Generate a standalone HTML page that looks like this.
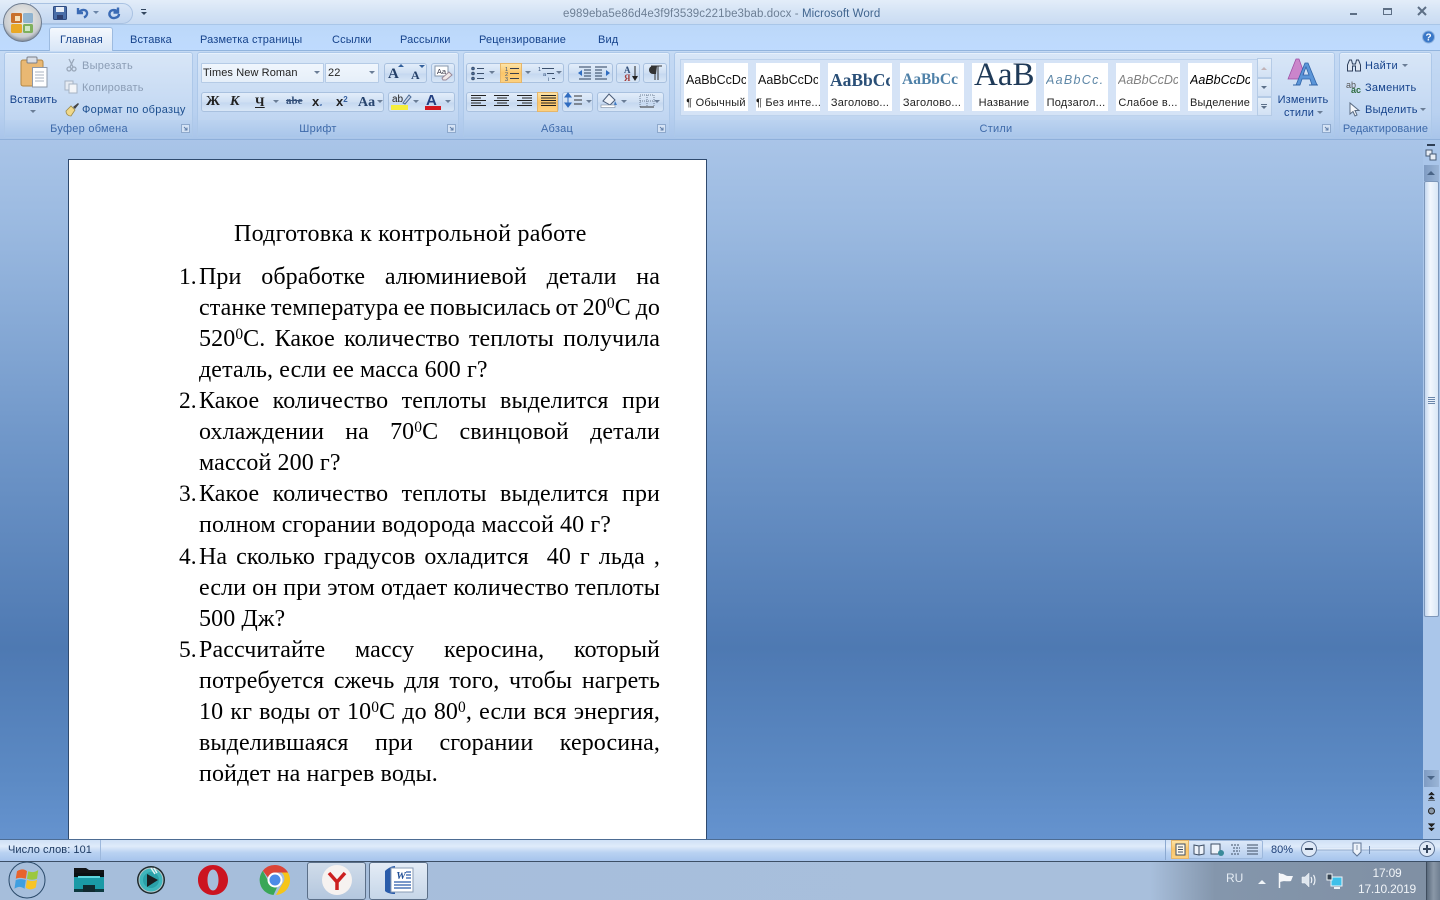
<!DOCTYPE html>
<html lang="ru"><head><meta charset="utf-8"><title>Microsoft Word</title>
<style>
*{box-sizing:border-box}
html,body{margin:0;padding:0}
body{width:1440px;height:900px;position:relative;overflow:hidden;font-family:"Liberation Sans",sans-serif;background:#6f97cc}
.a{position:absolute}
.t{position:absolute;font-size:11px;line-height:14px;white-space:nowrap;color:#15428b;letter-spacing:.15px;margin-top:1px}
.c{text-align:center;transform:translateX(-50%)}
#bg{left:0;top:138px;width:1440px;height:701px;background:linear-gradient(#aac5e8 0,#9ab9e0 90px,#7097c9 300px,#4e79b2 510px,#5c8ac4 640px,#6593cf 701px)}
#title{left:0;top:0;width:1440px;height:25px;background:linear-gradient(#e3edf9,#d4e3f5 50%,#c9dbf2)}
#tabs{left:0;top:24px;width:1440px;height:28px;background:linear-gradient(#bcd8f9,#bfdbff);border-top:1px solid #a9c6e8}
#rib{left:0;top:50px;width:1440px;height:90px;background:linear-gradient(#c5daf4,#b9d1f0 70%,#a9c5ea);border-bottom:1px solid #8fb0da;border-top:1px solid #92b4dd}
.g{position:absolute;top:52px;height:86px;border:1px solid #adc8e9;border-radius:3px;background:linear-gradient(#d8e6f7,#c6daf3 60%,#b9d0ee);box-shadow:0 1px 0 #e6f0fc inset}
.gl{position:absolute;left:0;right:0;bottom:0;height:17px;background:linear-gradient(#bcd3f0,#a9c6ea);color:#3e6aaa;text-align:center;font-size:11px;line-height:18px;letter-spacing:.25px}
.bx{position:absolute;border:1px solid #a9c1df;border-radius:3px;background:linear-gradient(#e2edfa,#cfdff3 50%,#c5d8f0 55%,#d8e6f6)}
.wh{background:linear-gradient(#f0f6fd,#e6eff9);border:1px solid #b5cbe6;border-radius:1px}
.hl{position:absolute;background:linear-gradient(#fde4a8,#fbc568 50%,#fdd17f);border:1px solid #e5b66b}
.ar{position:absolute;width:0;height:0;border-left:3px solid transparent;border-right:3px solid transparent;border-top:3px solid #6a7d96}
.cell{position:absolute;top:63px;width:64px;height:48px;background:#fff;overflow:hidden}
.cell b,.cell i,.cell span{position:absolute;white-space:nowrap}
.cell .n{left:0;right:0;top:33px;text-align:center;font-size:11px;line-height:14px;color:#222;letter-spacing:.2px}
.cell .s{left:2px;top:10px;width:60px;overflow:hidden;font-size:12.5px;line-height:15px;color:#111;font-weight:normal;font-style:normal}
#page{left:69px;top:160px;width:637px;height:679px;background:#fff;box-shadow:0 0 0 1px #2f4a6e}
.l{position:absolute;left:199px;width:461px;height:31px;line-height:31px;margin-top:1px;font-family:"Liberation Serif",serif;font-size:24px;letter-spacing:.1px;color:#000;text-align:justify;text-align-last:justify;white-space:nowrap}
.e{text-align-last:left}
.num{position:absolute;left:179px;height:31px;line-height:31px;margin-top:1px;font-family:"Liberation Serif",serif;font-size:23.47px;color:#000}
.l sup{font-size:15.5px;line-height:0;vertical-align:7px}
#sb{left:1423px;top:140px;width:17px;height:699px;background:#aac6ea}
#st{left:0;top:839px;width:1440px;height:22px;background:linear-gradient(#cfe0f6,#dfebfa 30%,#b9d2f2 60%,#a7c4ec);border-top:1px solid #4d6c93}
#tb{left:0;top:861px;width:1440px;height:39px;background:linear-gradient(90deg,#a6bedb 0,#a8bfdc 1150px,#8496ac 1215px,#7f8fa3 100%);border-top:1px solid #3c4f66}
.tbb{position:absolute;top:862px;width:59px;height:38px;border:1px solid #5b6f88;border-radius:3px;background:linear-gradient(#d0dcea,#b4c7de)}
svg{position:absolute;overflow:visible}
</style></head><body>
<div class="a" id="bg"></div>
<div class="a" id="title"></div>
<div class="a" id="tabs"></div>
<div class="a" id="rib"></div>

<!-- QAT -->
<div class="a" style="left:30px;top:3px;width:103px;height:21px;border-radius:0 11px 11px 0;background:linear-gradient(#d9e6f7,#c2d6f0);border:1px solid #a9c2e2"></div>
<!-- Office button -->
<svg style="left:0;top:0" width="46" height="46" viewBox="0 0 46 46">
<defs><radialGradient id="o" cx=".5" cy=".4" r=".6"><stop offset="0" stop-color="#f6f3ea"/><stop offset=".8" stop-color="#c9ccd0"/><stop offset="1" stop-color="#7d8794"/></radialGradient></defs>
<circle cx="22.5" cy="22.5" r="19" fill="url(#o)" stroke="#6d7b8e"/>
<rect x="11" y="13" width="11" height="10" rx="1.5" fill="#c9702a"/>
<rect x="23" y="13" width="10" height="10" rx="1.5" fill="#7aa7cc" fill-opacity=".8"/>
<rect x="11" y="24" width="11" height="9" rx="1.5" fill="#e9a825"/>
<rect x="23" y="24" width="10" height="9" rx="1.5" fill="#7fb05d"/>
<rect x="15" y="16" width="5" height="5" fill="#f6e0b8"/><rect x="25" y="26" width="5" height="5" fill="#cfe8c5"/>
</svg>
<!-- save/undo/redo -->
<svg style="left:53px;top:6px" width="14" height="14" viewBox="0 0 14 14"><rect x="0.5" y="0.5" width="13" height="13" rx="1" fill="#4a6ea8" stroke="#2f4a80"/><rect x="3" y="1" width="8" height="5" fill="#e8eef7"/><rect x="4" y="9" width="6" height="4" fill="#2f4070"/></svg>
<svg style="left:75px;top:6px" width="15" height="14" viewBox="0 0 15 14"><path d="M3 2v5h5M3.5 7C6 3 11 3 12 6.500c.5 2-1 4-3 5" fill="none" stroke="#3b6bb5" stroke-width="2.400"/></svg>
<div class="ar" style="left:93px;top:11px;border-top-color:#6b85a8"></div>
<svg style="left:107px;top:6px" width="15" height="14" viewBox="0 0 15 14"><path d="M11 1.500v5H6.500M11 6C8.500 3 3.500 3.500 2.500 7c-.7 3 2 5.500 5 5s4.500-2 4.500-4" fill="none" stroke="#3b6bb5" stroke-width="2.400"/></svg>
<div class="a" style="left:141px;top:9px;width:5px;height:1px;background:#33475f"></div><div class="ar" style="left:140.500px;top:12px;border-top-color:#33475f"></div>

<div class="t" style="left:563px;top:7px;margin-top:0;font-size:11.5px;letter-spacing:.09px;color:#6d7f95">e989eba5e86d4e3f9f3539c221be3bab.docx - <span style="color:#41658f">Microsoft Word</span></div>
<!-- window buttons -->
<div class="a" style="left:1350px;top:13px;width:7px;height:2px;background:#5d6f85"></div>
<div class="a" style="left:1383px;top:8px;width:9px;height:7px;border:1px solid #5d6f85;border-top-width:2px"></div>
<svg style="left:1417px;top:6px" width="10" height="10" viewBox="0 0 10 10"><path d="M1 1l8 8M9 1l-8 8" stroke="#5d6f85" stroke-width="2"/></svg>

<!-- tabs -->
<div class="a" style="left:49px;top:27px;width:64px;height:24px;background:linear-gradient(#f4f8fd,#d8e6f7);border:1px solid #9dbbe0;border-bottom:0;border-radius:3px 3px 0 0"></div>
<div class="t" style="left:60px;top:32px;color:#15428b">Главная</div>
<div class="t" style="left:130px;top:32px">Вставка</div>
<div class="t" style="left:200px;top:32px">Разметка страницы</div>
<div class="t" style="left:332px;top:32px">Ссылки</div>
<div class="t" style="left:400px;top:32px">Рассылки</div>
<div class="t" style="left:479px;top:32px">Рецензирование</div>
<div class="t" style="left:598px;top:32px">Вид</div>
<svg style="left:1422px;top:30px" width="13" height="14" viewBox="0 0 13 14"><circle cx="6.500" cy="7" r="6" fill="#3a78c8" stroke="#8fb3df"/><text x="6.500" y="10.500" font-size="10" font-weight="bold" fill="#fff" text-anchor="middle" font-family="Liberation Sans">?</text></svg>

<!-- groups -->
<div class="g" style="left:4px;width:189px"><div class="gl" style="padding-right:19px">Буфер обмена</div></div>
<div class="g" style="left:197px;width:262px"><div class="gl" style="padding-right:20px">Шрифт</div></div>
<div class="g" style="left:463px;width:207px"><div class="gl" style="padding-right:19px">Абзац</div></div>
<div class="g" style="left:674px;width:661px"><div class="gl" style="padding-right:17px">Стили</div></div>
<div class="g" style="left:1339px;width:93px"><div class="gl" style="letter-spacing:.1px">Редактирование</div></div>
<svg style="left:181px;top:124px" width="9" height="9"><rect x=".5" y=".5" width="8" height="8" fill="#d5e3f5" stroke="#8ea9cc"/><path d="M3 3l3 3M6 3.500V6H3.500" stroke="#5f7ea8" fill="none"/></svg>
<svg style="left:447px;top:124px" width="9" height="9"><rect x=".5" y=".5" width="8" height="8" fill="#d5e3f5" stroke="#8ea9cc"/><path d="M3 3l3 3M6 3.500V6H3.500" stroke="#5f7ea8" fill="none"/></svg>
<svg style="left:657px;top:124px" width="9" height="9"><rect x=".5" y=".5" width="8" height="8" fill="#d5e3f5" stroke="#8ea9cc"/><path d="M3 3l3 3M6 3.500V6H3.500" stroke="#5f7ea8" fill="none"/></svg>
<svg style="left:1322px;top:124px" width="9" height="9"><rect x=".5" y=".5" width="8" height="8" fill="#d5e3f5" stroke="#8ea9cc"/><path d="M3 3l3 3M6 3.500V6H3.500" stroke="#5f7ea8" fill="none"/></svg>

<!-- clipboard -->
<svg style="left:20px;top:56px" width="28" height="33" viewBox="0 0 28 33"><rect x="1" y="4" width="22" height="26" rx="2" fill="#e9b873" stroke="#b48744"/><rect x="7" y="1" width="10" height="6" rx="1" fill="#d9dee6" stroke="#7a7f88"/><path d="M12.500 11.500H27V31H12.500z" fill="#fff" stroke="#8d98a8"/><path d="M15 16h9M15 19h9M15 22h9M15 25h9" stroke="#a9b3c0"/></svg>
<div class="t c" style="left:33.500px;top:92px;letter-spacing:.1px">Вставить</div>
<div class="ar" style="left:30px;top:110px"></div>
<svg style="left:66px;top:58px" width="11" height="14" viewBox="0 0 11 14"><path d="M3 1l4 8M8 1L4 9" stroke="#9aa8ba" stroke-width="1.300"/><circle cx="3" cy="11" r="2" fill="none" stroke="#9aa8ba" stroke-width="1.300"/><circle cx="8" cy="11" r="2" fill="none" stroke="#9aa8ba" stroke-width="1.300"/></svg>
<div class="t" style="left:82px;top:58px;color:#8b9db5;letter-spacing:.25px">Вырезать</div>
<svg style="left:64px;top:80px" width="14" height="14" viewBox="0 0 14 14"><rect x="1" y="1" width="8" height="9" fill="#e6ebf2" stroke="#a6b3c4"/><rect x="5" y="4" width="8" height="9" fill="#f3f5f8" stroke="#a6b3c4"/></svg>
<div class="t" style="left:82px;top:80px;color:#8b9db5;letter-spacing:.25px">Копировать</div>
<svg style="left:64px;top:102px" width="16" height="15" viewBox="0 0 16 15"><path d="M2 9l5-5 4 4-4 6c-3 0-5-2-5-5z" fill="#f0d88a" stroke="#9c8a4a" stroke-width=".8"/><path d="M9 5l5-4 1 1-4 5z" fill="#444"/></svg>
<div class="t" style="left:82px;top:102px;color:#1d4f8f;letter-spacing:.3px">Формат по образцу</div>

<!-- font -->
<div class="a wh" style="left:201px;top:63px;width:123px;height:20px"></div>
<div class="a wh" style="left:325px;top:63px;width:54px;height:20px"></div>
<div class="t" style="left:203px;top:65px;color:#222;font-size:11px;letter-spacing:.1px">Times New Roman</div>
<div class="t" style="left:328px;top:65px;color:#222;font-size:11px">22</div>
<div class="ar" style="left:314px;top:71px"></div><div class="ar" style="left:369px;top:71px"></div>
<div class="bx" style="left:384px;top:63px;width:43px;height:20px"></div>
<div class="bx" style="left:431px;top:63px;width:24px;height:20px"></div>
<div class="t" style="left:388px;top:65px;font:bold 15px 'Liberation Serif',serif;color:#233f68">A</div>
<div class="ar" style="left:398px;top:64px;border-top:0;border-bottom:3px solid #33609c"></div>
<div class="t" style="left:411px;top:67px;font:bold 12px 'Liberation Serif',serif;color:#233f68">A</div>
<div class="ar" style="left:419px;top:65px;border-top-color:#33609c"></div>
<svg style="left:433px;top:64px" width="20" height="18" viewBox="0 0 20 18"><rect x="2" y="2" width="13" height="10" fill="#fff" stroke="#8797ab"/><text x="8.500" y="10" font-size="7.500" text-anchor="middle" font-family="Liberation Sans" fill="#334">Aa</text><path d="M9 14l7-6 3 3-6 5h-3z" fill="#f1e9e9" stroke="#9a8a9a"/></svg>
<div class="bx" style="left:201px;top:92px;width:183px;height:20px"></div>
<div class="bx" style="left:388px;top:92px;width:67px;height:20px"></div>
<div class="t" style="left:206px;top:93px;font:bold 14px 'Liberation Serif',serif;color:#222">Ж</div>
<div class="t" style="left:230px;top:93px;font:italic bold 14px 'Liberation Serif',serif;color:#222">К</div>
<div class="t" style="left:255px;top:93px;font:bold 13px 'Liberation Serif',serif;color:#222;text-decoration:underline">Ч</div>
<div class="ar" style="left:273px;top:100px"></div>
<div class="t" style="left:286px;top:94px;font:bold 11px 'Liberation Serif',serif;color:#34507a;text-decoration:line-through;letter-spacing:0">abe</div>
<div class="t" style="left:312px;top:93px;font:bold 13px 'Liberation Sans',sans-serif;color:#222;letter-spacing:0">x<span style="font-size:7px;color:#3560a0">₂</span></div>
<div class="t" style="left:336px;top:93px;font:bold 13px 'Liberation Sans',sans-serif;color:#222;letter-spacing:0">x<span style="font-size:8px;vertical-align:4px;line-height:0;color:#3560a0">2</span></div>
<div class="t" style="left:358px;top:94px;font:bold 14px 'Liberation Serif',serif;color:#27446e;letter-spacing:0">Aa</div>
<div class="ar" style="left:377px;top:100px"></div>
<div class="t" style="left:392px;top:92px;font-size:10px;color:#222;letter-spacing:0">ab</div>
<svg style="left:402px;top:94px" width="10" height="11" viewBox="0 0 10 11"><path d="M1 9l6-8 2 2-6 7z" fill="#cfd8e8" stroke="#4a6a96"/></svg>
<div class="a" style="left:391px;top:105px;width:17px;height:5px;background:#f5ee3c"></div>
<div class="ar" style="left:413px;top:100px"></div>
<div class="t" style="left:426px;top:91px;font:bold 15px 'Liberation Sans',sans-serif;color:#233f80;letter-spacing:0">A</div>
<div class="a" style="left:425px;top:106px;width:16px;height:4px;background:#d5181f"></div>
<div class="ar" style="left:445px;top:100px"></div>

<!-- paragraph -->
<div class="bx" style="left:466px;top:63px;width:98px;height:20px"></div>
<div class="bx" style="left:568px;top:63px;width:45px;height:20px"></div>
<div class="bx" style="left:616px;top:63px;width:24px;height:20px"></div>
<div class="bx" style="left:643px;top:63px;width:24px;height:20px"></div>
<div class="bx" style="left:466px;top:92px;width:93px;height:20px"></div>
<div class="bx" style="left:562px;top:92px;width:31px;height:20px"></div>
<div class="bx" style="left:597px;top:92px;width:67px;height:20px"></div>
<div class="hl" style="left:500px;top:63px;width:22px;height:20px"></div>
<div class="hl" style="left:537px;top:92px;width:21px;height:20px"></div>
<svg style="left:466px;top:63px" width="202" height="50" viewBox="0 0 202 50">
<g stroke="#3a4f6c" fill="#4f74a8">
<circle cx="7" cy="5.500" r="1.300"/><circle cx="7" cy="10.500" r="1.300"/><circle cx="7" cy="15.500" r="1.300"/>
<path d="M11 5.500h7M11 10.500h7M11 15.500h7" fill="none"/>
</g>
<g font-family="Liberation Sans" font-size="5.500" fill="#33507a"><text x="39" y="8">1</text><text x="39" y="13">2</text><text x="39" y="18">3</text>
<text x="72" y="8">1</text><text x="77" y="13">a</text><text x="82" y="18">i</text></g>
<path d="M44 5.500h9M44 10.500h9M44 15.500h9" stroke="#3a3f4c"/>
<path d="M76 5.500h12M81 10.500h7M86 15.500h3" stroke="#3a4f6c"/>
<g stroke="#2a3f5c"><path d="M113 4h12M118 7h7M118 10h7M118 13h7M113 16h12"/><path d="M129 4h12M129 7h7M129 10h7M129 13h7M129 16h12"/></g>
<path d="M116 7l-4 3 4 3z" fill="#2f6cc0"/><path d="M140 7l4 3-4 3z" fill="#2f6cc0"/>
<text x="158" y="10" font-family="Liberation Serif" font-size="9" font-weight="bold" fill="#33507a">A</text>
<text x="158" y="18" font-family="Liberation Serif" font-size="9" font-weight="bold" fill="#a34040">Я</text>
<path d="M169 3v13M166.500 13l2.500 4 2.500-4" stroke="#222" fill="#222"/>
<path d="M189 3v14M192 3v14" stroke="#333"/><path d="M191 3h-4a4 4 0 0 0 0 8h3" fill="#333"/><path d="M185 3h11" stroke="#333"/>
<g stroke="#222"><path d="M5 32.500h15M5 35h10M5 37.500h15M5 40h10M5 42.500h15"/><path d="M28 32.500h15M31 35h10M28 37.500h15M31 40h10M28 42.500h15"/><path d="M51 32.500h15M56 35h10M51 37.500h15M56 40h10M51 42.500h15"/><path d="M75 32.500h15M75 35h15M75 37.500h15M75 40h15M75 42.500h15"/></g>
<path d="M102 30l-3 4h6zM102 44l-3-4h6zM102 34v6" fill="#2f6cc0" stroke="#2f6cc0"/>
<path d="M108 33h8M108 37h8M108 41h8" stroke="#333"/>
<path d="M137 38l6-7 6 6-5 5z" fill="#eef2f8" stroke="#4a5c78"/><path d="M149 38l2 4-3 0z" fill="#3b78c4"/><rect x="135" y="42" width="14" height="2.500" fill="#fff" stroke="#7a8a9e" stroke-width=".6"/>
<path d="M174 32h14v12h-14zM174 38h14M181 32v12" fill="none" stroke="#6d7e95" stroke-dasharray="1 1"/><path d="M174 44h14" stroke="#333"/>
</svg>
<div class="ar" style="left:489px;top:71px"></div><div class="ar" style="left:525px;top:71px"></div><div class="ar" style="left:556px;top:71px"></div>
<div class="ar" style="left:586px;top:100px"></div><div class="ar" style="left:621px;top:100px"></div><div class="ar" style="left:654px;top:100px"></div>

<!-- styles -->
<div class="a" style="left:680px;top:59px;width:577px;height:57px;background:#d5e3f6;border:1px solid #bdd2ec;border-right:0"></div>
<div class="cell" style="left:684px"><span class="s">AaBbCcDc</span><span class="n">¶ Обычный</span></div>
<div class="cell" style="left:756px"><span class="s">AaBbCcDc</span><span class="n">¶ Без инте...</span></div>
<div class="cell" style="left:828px"><b class="s" style="font:bold 17.500px 'Liberation Serif',serif;color:#2a4f77;top:7px">AaBbCc</b><span class="n">Заголово...</span></div>
<div class="cell" style="left:900px"><b class="s" style="font:bold 15.500px 'Liberation Serif',serif;color:#4f81a8;top:8px">AaBbCc</b><span class="n">Заголово...</span></div>
<div class="cell" style="left:972px"><span class="s" style="font:33px/38px 'Liberation Serif',serif;color:#1f3a58;top:-7px;left:2px;width:62px;height:38px">AaB</span><span class="n">Название</span></div>
<div class="cell" style="left:1044px"><i class="s" style="font-style:italic;color:#5e87a7;letter-spacing:1.300px;font-size:12.500px">AaBbCc.</i><span class="n">Подзагол...</span></div>
<div class="cell" style="left:1116px"><i class="s" style="font-style:italic;color:#808080">AaBbCcDc</i><span class="n">Слабое в...</span></div>
<div class="cell" style="left:1188px"><i class="s" style="font-style:italic;color:#000">AaBbCcDc</i><span class="n">Выделение</span></div>
<div class="a" style="left:1257px;top:58px;width:15px;height:20px;background:linear-gradient(#e6eff9,#d2e1f4);border:1px solid #b5cbe6"></div>
<div class="a" style="left:1257px;top:78px;width:15px;height:19px;background:linear-gradient(#e6eff9,#d2e1f4);border:1px solid #b5cbe6"></div>
<div class="a" style="left:1257px;top:97px;width:15px;height:19px;background:linear-gradient(#e6eff9,#d2e1f4);border:1px solid #b5cbe6"></div>
<div class="ar" style="left:1261px;top:67px;border-top:0;border-bottom:3px solid #c2b4b8"></div>
<div class="ar" style="left:1261px;top:86px;border-top-color:#5d7089"></div>
<div class="a" style="left:1261px;top:104px;width:6px;height:1px;background:#5d7089"></div><div class="ar" style="left:1261px;top:106px;border-top-color:#5d7089"></div>
<svg style="left:1287px;top:57px" width="32" height="30" viewBox="0 0 32 30"><path d="M1 22L9 2h3l5 14-2 6z" fill="#c86ec0" fill-opacity=".8" stroke="#9a4aa0" stroke-width=".7"/><path d="M9 28L18 6h3l9 22h-5l-2-6h-8l-2 6zM16 18h6l-3-8z" fill="#5b95d8" stroke="#2f64a8" stroke-width=".8" fill-rule="evenodd"/><path d="M6 28h7M22 28h9" stroke="#2f64a8"/></svg>
<div class="t c" style="left:1303px;top:92px">Изменить</div>
<div class="t c" style="left:1299px;top:105px">стили</div>
<div class="ar" style="left:1317px;top:111px"></div>

<!-- editing -->
<svg style="left:1346px;top:58px" width="16" height="14" viewBox="0 0 16 14"><path d="M1.500 13V7l2-5h2l1 4h3l1-4h2l2 5v6h-5V8H6.500v5z" fill="#dfe7f2" stroke="#2d3f5c"/></svg>
<div class="t" style="left:1365px;top:58px;letter-spacing:.3px">Найти</div><div class="ar" style="left:1402px;top:64px"></div>
<div class="t" style="left:1346px;top:77px;font-size:9px;color:#555;letter-spacing:0">ab</div>
<div class="t" style="left:1351px;top:84px;font:bold 9px 'Liberation Sans',sans-serif;color:#2e6b3e;letter-spacing:0">ac</div>
<div class="t" style="left:1365px;top:80px;letter-spacing:.25px">Заменить</div>
<svg style="left:1349px;top:102px" width="11" height="15" viewBox="0 0 11 15"><path d="M1 1v11l3-2.500 2 4.500 2-1-2-4.500h4z" fill="#f4f7fb" stroke="#5a6b82"/></svg>
<div class="t" style="left:1365px;top:102px;letter-spacing:.25px">Выделить</div><div class="ar" style="left:1420px;top:108px"></div>

<!-- document -->
<div class="a" id="page"></div>
<div class="l e" style="left:234px;top:218px;width:auto;letter-spacing:.25px">Подготовка к контрольной работе</div>
<div class="num" style="top:261px">1.</div>
<div class="l" style="top:261px">При обработке алюминиевой детали на</div>
<div class="l" style="top:292px;word-spacing:-5px">станке температура ее повысилась от 20<sup>0</sup>С до</div>
<div class="l" style="top:323px">520<sup>0</sup>С. Какое количество теплоты получила</div>
<div class="l e" style="top:354px">деталь, если ее масса 600 г?</div>
<div class="num" style="top:385px">2.</div>
<div class="l" style="top:385px">Какое количество теплоты выделится при</div>
<div class="l" style="top:416px">охлаждении на 70<sup>0</sup>С свинцовой детали</div>
<div class="l e" style="top:447px">массой 200 г?</div>
<div class="num" style="top:478px">3.</div>
<div class="l" style="top:478px">Какое количество теплоты выделится при</div>
<div class="l e" style="top:509px">полном сгорании водорода массой 40 г?</div>
<div class="num" style="top:541px">4.</div>
<div class="l" style="top:541px">На сколько градусов охладится &nbsp;40 г льда ,</div>
<div class="l" style="top:572px;word-spacing:-5px">если он при этом отдает количество теплоты</div>
<div class="l e" style="top:603px">500 Дж?</div>
<div class="num" style="top:634px">5.</div>
<div class="l" style="top:634px">Рассчитайте массу керосина, который</div>
<div class="l" style="top:665px">потребуется сжечь для того, чтобы нагреть</div>
<div class="l" style="top:696px">10 кг воды от 10<sup>0</sup>С до 80<sup>0</sup>, если вся энергия,</div>
<div class="l" style="top:727px">выделившаяся при сгорании керосина,</div>
<div class="l e" style="top:758px">пойдет на нагрев воды.</div>

<!-- scrollbar -->
<div class="a" id="sb"></div>
<div class="a" style="left:1427px;top:144px;width:8px;height:2px;background:#2f3f55"></div>
<svg style="left:1425px;top:149px" width="12" height="13" viewBox="0 0 12 13"><rect x="1" y="1" width="6" height="6" fill="#e8eef6" stroke="#475a74"/><rect x="5" y="5" width="6" height="6" fill="#e8eef6" stroke="#475a74"/></svg>
<div class="a" style="left:1424px;top:165px;width:15px;height:16px;background:linear-gradient(90deg,#7f9cc3,#9bb5d6)"></div>
<div class="ar" style="left:1427px;top:171px;border-left-width:4px;border-right-width:4px;border-top:0;border-bottom:4px solid #4a6587"></div>
<div class="a" style="left:1424px;top:181px;width:15px;height:436px;background:linear-gradient(90deg,#c5d8f0,#f2f7fd 40%,#d9e6f6);border:1px solid #7d97ba;border-radius:2px"></div>
<div class="a" style="left:1428px;top:397px;width:7px;height:7px;background:repeating-linear-gradient(#6a86ab 0,#6a86ab 1px,transparent 1px,transparent 2px)"></div>
<div class="a" style="left:1424px;top:770px;width:15px;height:17px;background:linear-gradient(90deg,#7f9cc3,#9bb5d6)"></div>
<div class="ar" style="left:1427px;top:776px;border-left-width:4px;border-right-width:4px;border-top:4px solid #4a6587"></div>
<svg style="left:1426px;top:790px" width="11" height="45" viewBox="0 0 11 45"><path d="M5.500 2l3 3h-6zM5.500 6l3 3h-6zM2 10.500h7" fill="#222" stroke="#222" stroke-width=".5"/><circle cx="5.500" cy="21" r="3" fill="#8a98a8" stroke="#222"/><path d="M2 33.500h7M5.500 41l3-3h-6zM5.500 37l3-3h-6z" fill="#222" stroke="#222" stroke-width=".5"/></svg>

<!-- status -->
<div class="a" id="st"></div>
<div class="t" style="left:8px;top:842px;color:#1d3a62;letter-spacing:.05px">Число слов: 101</div>
<div class="a" style="left:100px;top:840px;width:1px;height:20px;background:#9db8dc"></div>
<div class="a" style="left:1165px;top:840px;width:1px;height:20px;background:#8ca9d0"></div>
<div class="a" style="left:1171px;top:840px;width:92px;height:19px;background:linear-gradient(#dce8f8,#b7cfef);border:1px solid #9db8dc;border-radius:2px"></div>
<div class="hl" style="left:1171px;top:840px;width:18px;height:19px"></div>
<svg style="left:1171px;top:840px" width="92" height="19" viewBox="0 0 92 19"><g fill="none" stroke="#3e4e64"><rect x="5" y="4" width="9" height="11" fill="#fff8e8"/><path d="M7 7h5M7 9.500h5M7 12h5"/><path d="M23 5l5 1 5-1v9l-5 1-5-1zM28 6v9" fill="#eef3fa"/><rect x="40" y="4" width="9" height="10" fill="#eef3fa"/><circle cx="50" cy="13" r="3" fill="#3a8a9a" stroke="none"/><path d="M60 5h9M62 8h7M62 11h7M60 14h9" stroke-dasharray="2 1"/><path d="M76 5h11M76 8h11M76 11h11M76 14h11"/></g></svg>
<div class="t" style="left:1271px;top:842px;color:#1d3f78;letter-spacing:0">80%</div>
<svg style="left:1300px;top:840px" width="140" height="19" viewBox="0 0 140 19"><path d="M17 9h103" stroke="#f3f7fd"/><path d="M17 10h103" stroke="#8fa9cc"/><path d="M69.500 6v8" stroke="#6f8ab0"/>
<circle cx="9" cy="9" r="7.500" fill="#dfe9f7" stroke="#5f7596"/><path d="M5 9h8" stroke="#33445c" stroke-width="2"/>
<circle cx="127" cy="9" r="7.500" fill="#dfe9f7" stroke="#5f7596"/><path d="M123 9h8M127 5v8" stroke="#33445c" stroke-width="2"/>
<path d="M53 3h8v9l-4 4-4-4z" fill="#eef3fa" stroke="#5f7596"/><path d="M57 5v5" stroke="#8899b0"/></svg>

<!-- taskbar -->
<div class="a" id="tb"></div>
<div class="tbb" style="left:307px"></div>
<div class="tbb" style="left:369px;background:linear-gradient(#e4ecf6,#c6d6e8)"></div>
<svg style="left:8px;top:861px" width="40" height="39" viewBox="0 0 40 39"><defs><radialGradient id="st" cx=".5" cy=".3" r=".75"><stop offset="0" stop-color="#9cc8e8"/><stop offset=".6" stop-color="#2f74ae"/><stop offset="1" stop-color="#0d4470"/></radialGradient></defs>
<circle cx="19" cy="19" r="18" fill="url(#st)" stroke="#2a4a6a"/>
<g transform="translate(19 19) scale(1.25) translate(-18 -19)"><path d="M10 12c3-2 6-2 8 0l-1 6c-3-1-6-1-8 0z" fill="#e8632c"/><path d="M19 12c3 1 5 1 8-1l-1 7c-3 1-5 1-8 0z" fill="#9cc83e"/><path d="M9 19c3-1 5-1 8 0l-1 7c-3-2-5-2-8 0z" fill="#3f9fe0"/><path d="M18 19c3 1 5 1 8 0l-1 6c-3 2-6 2-8 0z" fill="#f7c426"/></g></svg>
<svg style="left:73px;top:864px" width="32" height="32" viewBox="0 0 32 32"><path d="M1 4h12l3 2h15v10H1z" fill="#121416"/><rect x="1" y="12" width="30" height="15" fill="#1a9aa6"/><rect x="1" y="25" width="30" height="3" fill="#0d3a40"/><rect x="10" y="21" width="12" height="7" fill="#102a30"/><path d="M1 9h30v4H1z" fill="#0a1012"/><path d="M5 12h22v2H5z" fill="#5fd6de"/></svg>
<svg style="left:136px;top:865px" width="30" height="30" viewBox="0 0 30 30"><circle cx="15" cy="15" r="14" fill="#1e2a2c"/><circle cx="15" cy="15" r="12" fill="#3fb6bc" stroke="#b7c4c8"/><circle cx="15" cy="15" r="8" fill="#2aa0a8"/><path d="M11 9l11 6-11 7z" fill="#1a1e20"/><path d="M15 3l4 6M18 3l3 5" stroke="#e6f2f4" stroke-width="1.500"/></svg>
<svg style="left:197px;top:864px" width="32" height="32" viewBox="0 0 32 32"><path fill-rule="evenodd" d="M16 1c8.500 0 15 6.500 15 15s-6.500 15-15 15S1 24.500 1 16 7.500 1 16 1zm0 4.500c-3.300 0-5.500 4.700-5.500 10.500s2.200 10.500 5.500 10.500 5.500-4.700 5.500-10.500S19.300 5.500 16 5.500z" fill="#cc1420"/></svg>
<svg style="left:259px;top:864px" width="32" height="32" viewBox="0 0 32 32"><path d="M16 1a15 15 0 0 1 13 7.500H16a7.500 7.500 0 0 0-7 5L3.800 6.800A15 15 0 0 1 16 1z" fill="#db4437"/><path d="M29 8.500A15 15 0 0 1 17 31l6.500-11.500a7.500 7.500 0 0 0-1-11z" fill="#f5c518"/><path d="M3.800 6.800L10 18.500a7.500 7.500 0 0 0 8 5L14.500 31A15 15 0 0 1 3.800 6.800z" fill="#3aa757"/><circle cx="16" cy="16" r="7.500" fill="#fff"/><circle cx="16" cy="16" r="5.500" fill="#4c8be8"/></svg>
<svg style="left:322px;top:865px" width="30" height="30" viewBox="0 0 30 30"><circle cx="15" cy="15" r="15" fill="#f6f2f0"/><path d="M7 8l8 9 8-9M15 17v8" fill="none" stroke="#cc1f1f" stroke-width="3.500"/></svg>
<svg style="left:382px;top:865px" width="34" height="30" viewBox="0 0 34 30"><path d="M3 6c3-3 7-5 10-5v28C9 29 5 28 3 26z" fill="#2a5caa"/><rect x="9" y="3" width="22" height="24" fill="#fff" stroke="#8a9cb6"/><text x="19" y="14" font-family="Liberation Serif" font-size="11" font-weight="bold" font-style="italic" fill="#1f4e96" text-anchor="middle" style="letter-spacing:0">W</text><path d="M24 7h5M24 10h5M24 13h5M12 17h17M12 20h17M12 23h17" stroke="#2a5caa" stroke-width="1.300"/></svg>

<div class="t" style="left:1226px;top:871px;margin-top:0;color:#e4ebf3;font-size:12px;letter-spacing:0">RU</div>
<div class="ar" style="left:1258px;top:880px;border-left-width:4px;border-right-width:4px;border-top:0;border-bottom:4px solid #f0f4f8"></div>
<svg style="left:1278px;top:872px" width="16" height="17" viewBox="0 0 16 17"><path d="M1.500 1v15" stroke="#f4f6f9" stroke-width="1.500"/><path d="M2 2c4-1 5 2 8 2l5 0-2 5c-4 1-6-1-11 1z" fill="#f4f6f9"/></svg>
<svg style="left:1301px;top:872px" width="16" height="16" viewBox="0 0 16 16"><path d="M1 5h3l4-4v14l-4-4H1z" fill="#dfe6ee" stroke="#f4f6f9" stroke-width=".5"/><path d="M10 5c1 2 1 4 0 6M12.500 3c2 3 2 7 0 10" fill="none" stroke="#eef2f7" stroke-width="1.200"/></svg>
<svg style="left:1326px;top:873px" width="17" height="17" viewBox="0 0 17 17"><rect x="5" y="4" width="11" height="9" fill="#3fc0ea" stroke="#eef3f7"/><path d="M8 15h6" stroke="#eef3f7" stroke-width="2"/><path d="M1 1h5v6H1z" fill="#33404e" stroke="#eef3f7"/></svg>
<div class="t c" style="left:1387px;top:866px;margin-top:0;color:#f0f4f8;font-size:12px;letter-spacing:-.2px">17:09</div>
<div class="t c" style="left:1387px;top:882px;margin-top:0;color:#f0f4f8;font-size:12px;letter-spacing:-.2px">17.10.2019</div>
<div class="a" style="left:1426px;top:862px;width:14px;height:38px;background:linear-gradient(90deg,#5b6b7d,#8a98a8 50%,#6f7e90);border-left:1px solid #3f4d5e"></div>
</body></html>
